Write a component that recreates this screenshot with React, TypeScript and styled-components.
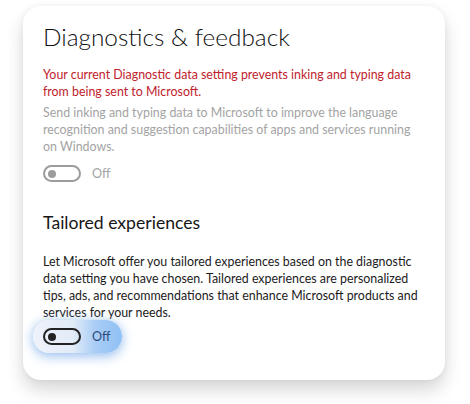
import {FC} from 'react';
import styled, {createGlobalStyle} from 'styled-components';

const GlobalStyle = createGlobalStyle`
  html, body {
    margin: 0;
    padding: 0;
    background: #ffffff;
  }
  body {
    font-family: Lato, 'Open Sans', sans-serif;
    -webkit-font-smoothing: antialiased;
  }
`;

const Page = styled.div`
  width: 470px;
  height: 404px;
  overflow: hidden;
  padding: 6px 25px 0 23px;
  box-sizing: border-box;
`;

const Card = styled.section`
  height: 374px;
  box-sizing: border-box;
  padding: 16px 19px 0 20px;
  background: #ffffff;
  border-radius: 18px;
  box-shadow: 0 10px 18px rgba(0, 0, 0, 0.16), 0 0 6px rgba(0, 0, 0, 0.05);
`;

const Title = styled.h1`
  margin: 0 0 14px;
  font-size: 24.4px;
  font-weight: 300;
  line-height: 30px;
  color: #111111;
`;

const Paragraph = styled.p<{$tone: 'warning' | 'muted' | 'normal'}>`
  margin: 0;
  font-size: 12.4px;
  line-height: 17px;
  color: ${({$tone}) =>
    $tone === 'warning' ? '#c0222c' : $tone === 'muted' ? '#a3a3a3' : '#1b1b1b'};
`;

const Stack = styled.div`
  display: flex;
  flex-direction: column;
  gap: 4px;
`;

const Subtitle = styled.h2`
  margin: 26px 0 18px;
  font-size: 17.6px;
  font-weight: 400;
  line-height: 24px;
  color: #161616;
`;

const ToggleRow = styled.div<{$focused?: boolean}>`
  position: relative;
  display: inline-flex;
  align-items: center;
  gap: 11px;
  margin-top: ${({$focused}) => ($focused ? '-1px' : '10px')};
  margin-left: ${({$focused}) => ($focused ? '-10px' : '0')};
  padding: ${({$focused}) => ($focused ? '8px 10px 8px 10px' : '0')};
  border-radius: 20px;
  background: ${({$focused}) =>
    $focused
      ? 'linear-gradient(90deg, #eef2fa 0%, #e2ebf8 45%, #a9cdf6 70%, #8fc0f4 100%)'
      : 'transparent'};
  box-shadow: ${({$focused}) =>
    $focused ? '0 4px 12px rgba(90, 150, 230, 0.45), 0 0 10px rgba(150, 190, 240, 0.5)' : 'none'};
`;

const Track = styled.span<{$disabled?: boolean}>`
  position: relative;
  display: inline-block;
  width: 34px;
  height: 13px;
  border-radius: 10px;
  border: 2px solid ${({$disabled}) => ($disabled ? '#9c9c9c' : '#222222')};
  box-sizing: content-box;
`;

const Knob = styled.span<{$disabled?: boolean}>`
  position: absolute;
  left: 3px;
  top: 2.5px;
  width: 8px;
  height: 8px;
  border-radius: 50%;
  background: ${({$disabled}) => ($disabled ? '#9c9c9c' : '#222222')};
`;

const ToggleLabel = styled.span<{$disabled?: boolean; $focused?: boolean}>`
  font-size: 12.6px;
  line-height: 17px;
  color: ${({$disabled, $focused}) => ($disabled ? '#a3a3a3' : $focused ? '#2b4a78' : '#1b1b1b')};
  padding-right: ${({$focused}) => ($focused ? '2px' : '0')};
`;

interface ToggleProps {
  label: string;
  disabled?: boolean;
  focused?: boolean;
}

const Toggle: FC<ToggleProps> = ({label, disabled, focused}) => (
  <ToggleRow $focused={focused}>
    <Track $disabled={disabled}>
      <Knob $disabled={disabled} />
    </Track>
    <ToggleLabel $disabled={disabled} $focused={focused}>
      {label}
    </ToggleLabel>
  </ToggleRow>
);

const App: FC = () => (
  <>
    <GlobalStyle />
    <Page>
      <Card>
        <Title>Diagnostics &amp; feedback</Title>
        <Stack>
          <Paragraph $tone="warning">
            Your current Diagnostic data setting prevents inking and typing data from being
            sent to Microsoft.
          </Paragraph>
          <Paragraph $tone="muted">
            Send inking and typing data to Microsoft to improve the language recognition and
            suggestion capabilities of apps and services running on Windows.
          </Paragraph>
        </Stack>
        <Toggle label="Off" disabled />
        <Subtitle>Tailored experiences</Subtitle>
        <Paragraph $tone="normal">
          Let Microsoft offer you tailored experiences based on the diagnostic data setting you
          have chosen. Tailored experiences are personalized tips, ads, and recommendations that
          enhance Microsoft products and services for your needs.
        </Paragraph>
        <div>
          <Toggle label="Off" focused />
        </div>
      </Card>
    </Page>
  </>
);

export default App;
